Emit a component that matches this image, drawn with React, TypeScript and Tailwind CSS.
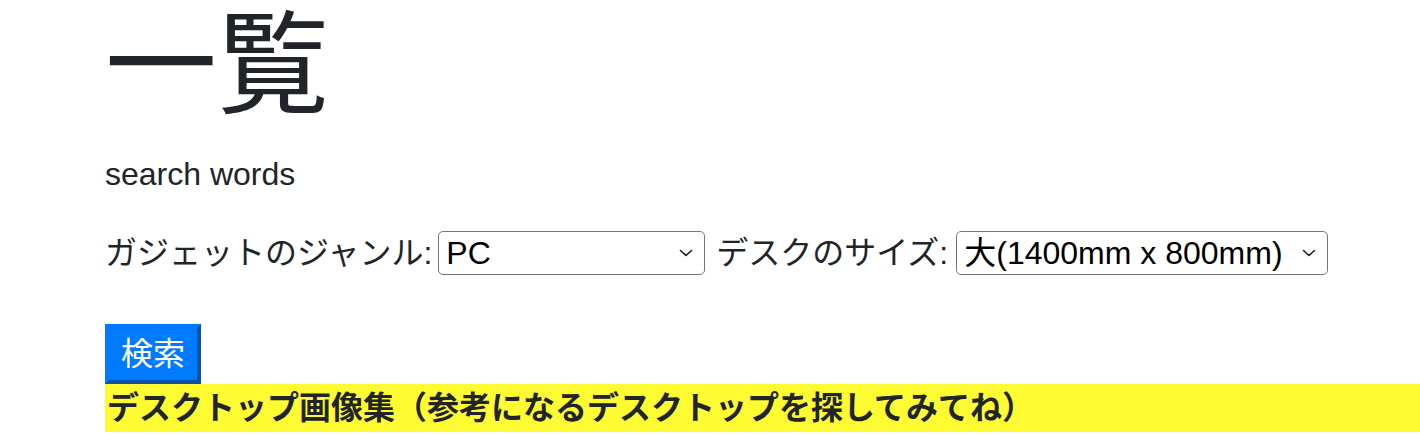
import { useState } from 'react';

const genres = ['PC', 'スマートフォン', 'タブレット', 'モニター', 'キーボード'];
const sizes = ['大(1400mm x 800mm)', '中(1200mm x 700mm)', '小(1000mm x 600mm)'];

function Chevron() {
  return (
    <svg
      viewBox="0 0 14 8"
      className="pointer-events-none absolute right-[12px] top-1/2 h-[8px] w-[14px] -translate-y-1/2"
      fill="none"
      stroke="#1f1f1f"
      strokeWidth="1.6"
      strokeLinecap="round"
      strokeLinejoin="round"
    >
      <path d="M1.5 1.5 7 6.5l5.5-5" />
    </svg>
  );
}

interface SelectBoxProps {
  value: string;
  options: string[];
  onChange: (v: string) => void;
  width: string;
}

function SelectBox({ value, options, onChange, width }: SelectBoxProps) {
  return (
    <div className={`relative ${width}`}>
      <select
        value={value}
        onChange={(e) => onChange(e.target.value)}
        className="h-[44px] w-full appearance-none rounded-[5px] border border-[#767676] bg-white pl-[7px] pr-[36px] text-[32px] leading-[42px] text-black outline-none"
      >
        {options.map((o) => (
          <option key={o} value={o}>
            {o}
          </option>
        ))}
      </select>
      <Chevron />
    </div>
  );
}

export default function App() {
  const [genre, setGenre] = useState('PC');
  const [size, setSize] = useState(sizes[0]);

  return (
    <div className="min-h-screen bg-white font-['Liberation_Sans','Noto_Sans_CJK_JP',sans-serif] text-[#212529]">
      <div className="pl-[105px]">
        <h1 className="mb-4 text-[112px] font-normal leading-[1.2]">一覧</h1>
        <p className="mb-[31px] text-[32px] leading-[48px]">search words</p>

        {/* filters */}
        <form className="flex h-[48px] items-center text-[32px]" onSubmit={(e) => e.preventDefault()}>
          <label className="mr-[6px]">ガジェットのジャンル:</label>
          <SelectBox value={genre} options={genres} onChange={setGenre} width="w-[267px]" />
          <label className="ml-[11px] mr-[8px]">デスクのサイズ:</label>
          <SelectBox value={size} options={sizes} onChange={setSize} width="w-[372px]" />
        </form>

        <button
          type="button"
          className="mt-[47px] flex h-[60px] w-[96px] items-center justify-center border-[4px] border-b-[#0a52a6] border-l-[#007bff] border-r-[#0a52a6] border-t-[#007bff] bg-[#007bff] text-[32px] leading-none text-white"
        >
          検索
        </button>

        <h2 className="bg-[#fffb33] pl-[2px] text-[32px] font-bold leading-[48px] text-[#212529]">
          デスクトップ画像集（参考になるデスクトップを探してみてね）
        </h2>
        <div className="h-[60px]" />
      </div>
    </div>
  );
}
